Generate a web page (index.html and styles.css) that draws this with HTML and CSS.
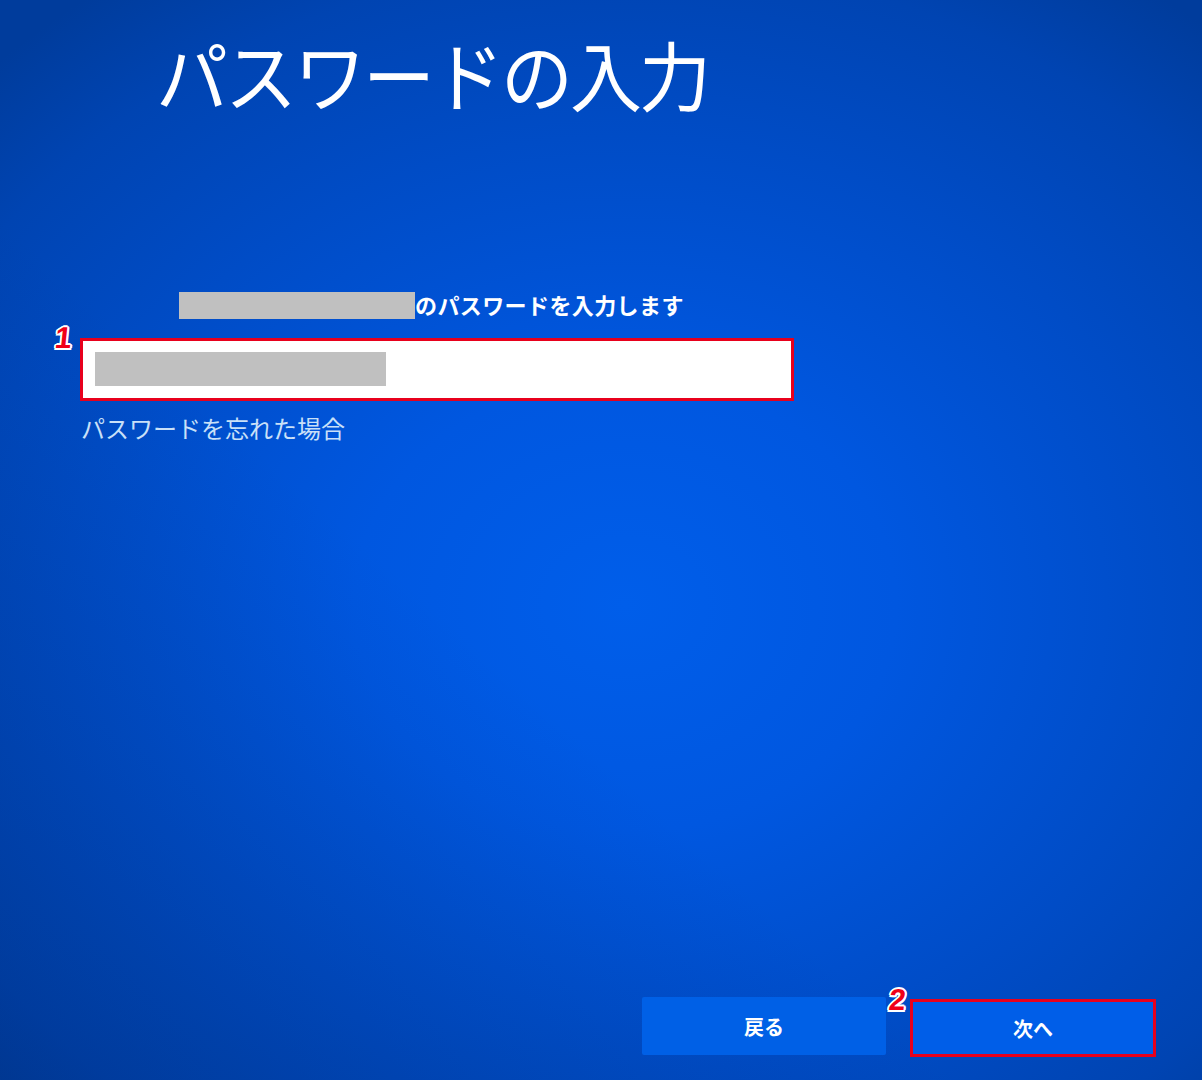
FILE: index.html
```html
<!DOCTYPE html>
<html lang="ja">
<head>
<meta charset="utf-8">
<title>パスワードの入力</title>
<link rel="stylesheet" href="styles.css">
</head>
<body>
<div class="screen">
  <h1 class="title">パスワードの入力</h1>
  <div class="prompt">
    <span class="mask mask-account"></span><span class="prompt-text">のパスワードを入力します</span>
  </div>
  <div class="field-wrap">
    <span class="step step-1">1</span>
    <div class="field">
      <span class="mask mask-password"></span>
    </div>
  </div>
  <a class="forgot" href="#">パスワードを忘れた場合</a>
  <div class="actions">
    <button class="btn btn-back" type="button">戻る</button>
    <div class="highlight">
      <span class="step step-2">2</span>
      <button class="btn btn-next" type="button">次へ</button>
    </div>
  </div>
</div>
</body>
</html>
```

FILE: styles.css
```css
* { box-sizing: border-box; }
html, body { margin: 0; padding: 0; }
body {
  width: 1202px;
  height: 1080px;
  overflow: hidden;
  font-family: "Noto Sans CJK JP", "Noto Sans", sans-serif;
  color: #ffffff;
}
.screen {
  width: 1202px;
  height: 1080px;
  display: flex;
  flex-direction: column;
  background:
    linear-gradient(to top right, rgba(0, 40, 110, 0.35) 0%, rgba(0, 40, 110, 0) 40%),
    radial-gradient(ellipse 75% 70% at 52% 56%, #005eea 0%, #0057e0 30%, #004cc6 62%, #0044b2 85%, #003c9c 100%);
  background-color: #0046b8;
}
.title {
  margin: 35px 0 0 156px;
  font-size: 72px;
  font-weight: 400;
  line-height: 1;
  letter-spacing: -3px;
  transform: scaleY(1.06);
  transform-origin: top left;
}
.prompt {
  margin: 185px 0 0 179px;
  display: flex;
  align-items: center;
  height: 26px;
}
.mask {
  display: block;
  background: #c0c0c0;
}
.mask-account { width: 236px; height: 27px; }
.prompt-text {
  font-size: 22px;
  font-weight: 700;
  line-height: 26px;
  letter-spacing: 0.4px;
  margin-top: -2px;
}
.field-wrap {
  position: relative;
  margin: 20px 0 0 80px;
  width: 714px;
}
.field {
  height: 63px;
  border: 3px solid #e8001c;
  background: #ffffff;
  padding: 11px 0 0 12px;
}
.mask-password { width: 291px; height: 34px; }
.step {
  position: absolute;
  font-family: "Liberation Sans", Arial, sans-serif;
  font-weight: 700;
  color: #f00018;
  line-height: 1;
  transform: skewX(-6deg);
  text-shadow:
    2px 0 0 #fff, -2px 0 0 #fff, 0 2px 0 #fff, 0 -2px 0 #fff,
    1.5px 1.5px 0 #fff, -1.5px 1.5px 0 #fff, 1.5px -1.5px 0 #fff, -1.5px -1.5px 0 #fff;
}
.step-1 { left: -25px; top: -15px; font-size: 30px; }
.step-2 { left: -24px; top: -17px; font-size: 30px; }
.forgot {
  margin: 11px 0 0 81px;
  font-size: 24px;
  font-weight: 400;
  line-height: 32px;
  color: #c9e0f8;
  text-decoration: none;
  align-self: flex-start;
}
.actions {
  margin-top: auto;
  margin-bottom: 23px;
  margin-right: 46px;
  display: flex;
  justify-content: flex-end;
  align-items: flex-end;
  gap: 24px;
}
.btn {
  border: none;
  font-family: "Noto Sans CJK JP", "Noto Sans", sans-serif;
  font-size: 20px;
  font-weight: 700;
  color: #ffffff;
  cursor: pointer;
}
.btn-back {
  width: 244px;
  height: 58px;
  margin-bottom: 2px;
  background: #0060e6;
  border-radius: 2px;
}
.highlight {
  position: relative;
  width: 246px;
  height: 58px;
  border: 3px solid #e8001c;
}
.btn-next {
  width: 100%;
  height: 100%;
  background: #005ee8;
  display: block;
}
```
